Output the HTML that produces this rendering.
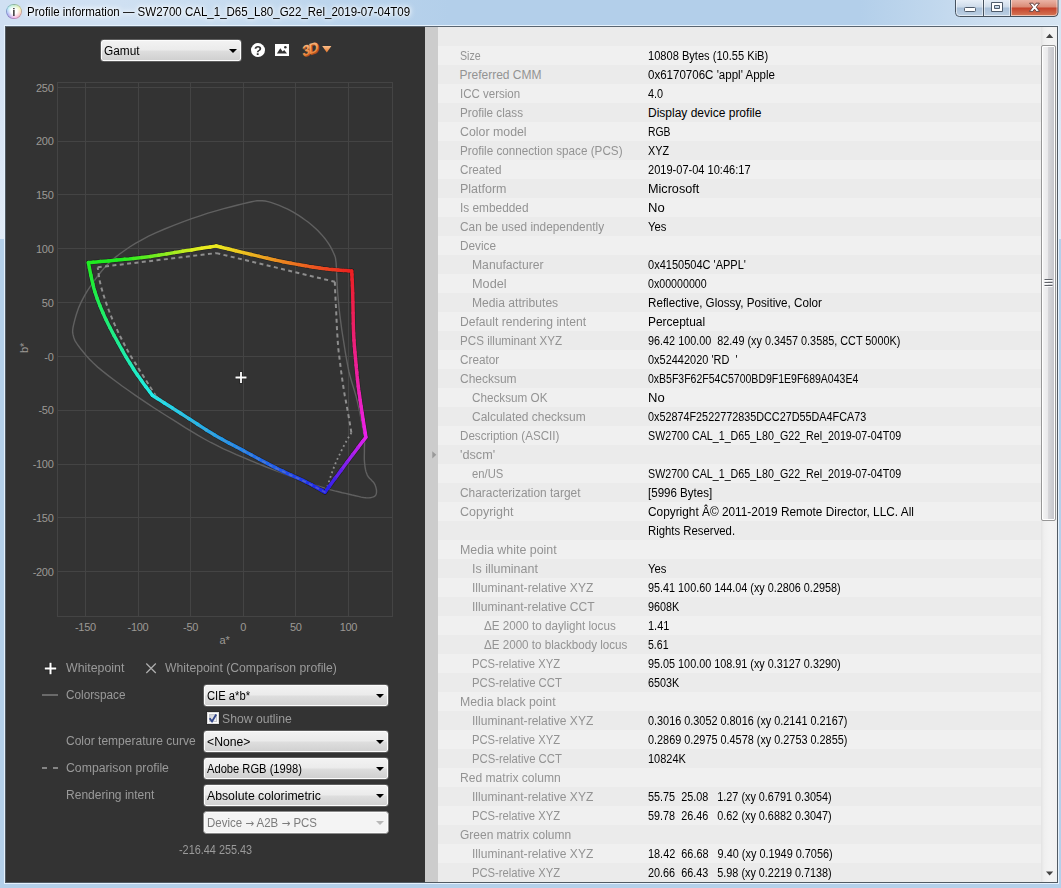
<!DOCTYPE html>
<html lang="en"><head><meta charset="utf-8"><title>Profile information</title>
<style>
*{box-sizing:border-box;margin:0;padding:0}
html,body{width:1061px;height:888px;overflow:hidden}
body{position:relative;font-family:"Liberation Sans",sans-serif;font-size:12px;color:#000;background:#b4d0ea}
.abs{position:absolute}
#frameTop{left:0;top:0;width:1061px;height:239px;background:linear-gradient(to right,#d0e0f3 0,#cfe0f2 120px,#c6dbef 240px,#b9d3ec 360px,#b3cfea 450px,#b3cfea 860px,#c0d7ed 930px,#cfe0f1 1000px,#d6e5f3 1061px)}
#frameSideL{left:0;top:24px;width:5px;height:215px;background:linear-gradient(to bottom,#d0e0f3,#e1ebf7)}
#frameSideR{left:1058px;top:24px;width:3px;height:215px;background:linear-gradient(to bottom,#d6e5f3,#e1ebf7)}
#hl{left:4px;top:25px;width:1055px;height:859px;border:1px solid #e6f2fd}
#client{left:5px;top:26px;width:1053px;height:857px;background:#333;border:1px solid #515a63;border-top-color:#5a6570;overflow:hidden}
#title{left:26.6px;top:3px;height:18px;line-height:18px;font-size:12px;white-space:pre;color:#000;text-shadow:0 0 6px #fff,0 0 6px #fff,0 0 3px #fff}
#left{left:6px;top:27px;width:419px;height:855px;background:#333}
#sash{left:425px;top:27px;width:13px;height:855px;background:#ccc}
#table{left:438px;top:27px;width:603px;height:855px;background:#f0f0f0;overflow:hidden}
.r{position:absolute;left:0;width:603px;height:19px;line-height:19px;white-space:pre}
.r.a{background:#ebebeb}
.r.b{background:#f0f0f0}
.l{position:absolute;top:1px;color:#939393;transform-origin:0 50%}
.v{position:absolute;top:1px;left:210px;color:#000;transform-origin:0 50%}
#sb{left:1041px;top:27px;width:16px;height:855px;background:linear-gradient(to right,#e3e3e3 0,#efefef 3px,#f3f3f3 8px,#f1f1f1 16px)}
#thumb{left:1041px;top:45px;width:15px;height:476px;border:1px solid #979797;border-radius:2px;background:linear-gradient(to right,#f5f5f5 0,#e9e9eb 45%,#d6d6d9 50%,#c2c3c9 100%);box-shadow:inset 0 0 0 1px #fff}
.lbl{position:absolute;color:#9a9a9a;white-space:pre;height:16px;line-height:16px}
.sel{position:absolute;height:23px;border:1px solid #5e5e5e;border-radius:3.5px;background:linear-gradient(to bottom,#f3f3f3 0,#ebebeb 48%,#dedede 52%,#cfcfcf 100%);box-shadow:inset 0 0 0 1px #fcfcfc;line-height:21px;padding:1px 0 0 3px;white-space:pre;color:#000}
.sel.dis{color:#7c7c7c;background:#f4f4f4;border-color:#8a8a8a}
.sel i{position:absolute;right:3.6px;top:8.6px;width:0;height:0;border-left:4px solid transparent;border-right:4px solid transparent;border-top:4.6px solid #000}
.sel.dis i{border-top-color:#b8b8b8}
.plot{position:absolute;left:0;top:0}
.ar{font-family:'DejaVu Sans',sans-serif;font-size:11px}
.sx{display:inline-block;transform-origin:0 50%;white-space:pre}
</style></head><body>
<div id="frameTop" class="abs"></div>
<div id="frameSideL" class="abs"></div><div id="frameSideR" class="abs"></div>
<div id="hl" class="abs"></div>
<div id="client" class="abs"></div>
<div class="abs" style="left:6.2px;top:3.9px;width:15.6px;height:15.6px;border-radius:50%;background:radial-gradient(circle at 50% 48%,#fff 0,#fff 26%,rgba(255,255,255,.5) 55%,rgba(255,255,255,0) 80%),conic-gradient(from 0deg,#7ad486,#eef08a 17%,#f8a294 32%,#ea86d4 48%,#9a7cdc 60%,#7c8cec 70%,#8ee6f2 84%,#7ad486);box-shadow:inset 0 0 0 0.8px rgba(70,70,110,.38)"></div><div class="abs" style="left:10px;top:4.8px;width:8px;height:14px;line-height:14px;text-align:center;font-weight:bold;font-size:11px;color:#1c1c1c;filter:grayscale(1);transform:scaleX(.9)">i</div>
<div id="title" class="abs"><span class="sx" style="transform:scaleX(0.9588)">Profile information — SW2700 CAL_1_D65_L80_G22_Rel_2019-07-04T09</span></div>
<svg class="abs" style="left:954px;top:0" width="106" height="19" viewBox="0 0 106 19">
<defs>
<linearGradient id="bt" x1="0" y1="0" x2="0" y2="1"><stop offset="0" stop-color="#e6eef7"/><stop offset="0.45" stop-color="#ccdae9"/><stop offset="0.46" stop-color="#a8bfd8"/><stop offset="1" stop-color="#bed1e4"/></linearGradient>
<linearGradient id="cl" x1="0" y1="0" x2="0" y2="1"><stop offset="0" stop-color="#eab3a6"/><stop offset="0.45" stop-color="#d98873"/><stop offset="0.46" stop-color="#c4402a"/><stop offset="1" stop-color="#d67a58"/></linearGradient>
</defs>
<path d="M1.5 0V12.5Q1.5 16.5 5.5 16.5H100Q104 16.5 104 12.5V0Z" fill="url(#bt)"/>
<path d="M56.5 0V16.5H100Q104 16.5 104 12.5V0Z" fill="url(#cl)"/>
<path d="M1.5 0V12.5Q1.5 16.5 5.5 16.5H100Q104 16.5 104 12.5V0" fill="none" stroke="#46525f" stroke-width="1"/>
<path d="M2.5 0V12.5Q2.5 15.5 5.5 15.5H100Q103 15.5 103 12.5V0" fill="none" stroke="#fff" stroke-opacity="0.55" stroke-width="1"/>
<path d="M29.5 0V16M56.5 0V16" stroke="#46525f" stroke-width="1"/>
<path d="M30.5 0V15.5M57.5 0V15.5M28.5 0V15.5M55.5 0V15.5" stroke="#fff" stroke-opacity="0.5" stroke-width="1"/>
<rect x="10.5" y="7.5" width="11" height="4" rx="1" fill="#fff" stroke="#4e5b6b"/>
<path d="M37.5 2.5H48.5V11.5H37.5Z M40.5 5.5V8.5H45.5V5.5Z" fill="#fff" fill-rule="evenodd" stroke="#4e5b6b"/>
<path d="M75.6 3.2H79L80.5 5.4L82 3.2H85.4L82.3 7.2L85.6 11.4H82.1L80.5 9.1L78.9 11.4H75.4L78.7 7.2Z" fill="#fff" stroke="#5a3a3a" stroke-width="0.9"/>
</svg>
<div id="left" class="abs">
<svg class="plot" width="419" height="640" viewBox="6 27 419 640">
<path d="M85.5 82V617M138.5 82V617M190.5 82V617M243.5 82V617M295.5 82V617M348.5 82V617M57 87.5H393M57 141.5H393M57 194.5H393M57 248.5H393M57 302.5H393M57 356.5H393M57 410.5H393M57 464.5H393M57 517.5H393M57 571.5H393" stroke="#444" stroke-width="1" fill="none"/>
<rect x="57.5" y="82.5" width="335" height="534" fill="none" stroke="#444"/>
<path d="M262.2 200.7 L259.5 200.6 L257.0 200.8 L254.6 201.1 L251.7 201.7 L248.2 202.5 L243.6 203.6 L237.9 205.0 L231.2 206.7 L223.8 208.6 L216.0 210.8 L208.0 213.2 L200.0 215.8 L191.7 218.7 L182.8 221.9 L173.7 225.4 L164.7 229.0 L156.2 232.6 L148.6 236.2 L141.8 239.8 L135.4 243.4 L129.6 247.0 L124.2 250.7 L119.3 254.3 L114.7 257.9 L110.6 261.4 L107.1 264.7 L104.1 268.1 L101.3 271.5 L98.6 274.9 L95.8 278.6 L93.0 282.5 L90.2 286.6 L87.5 290.7 L85.0 294.9 L82.7 299.1 L80.7 303.1 L78.9 307.1 L77.4 311.2 L76.1 315.3 L75.0 319.1 L74.1 322.7 L73.4 325.7 L72.9 328.1 L72.7 330.0 L72.6 331.6 L72.7 333.0 L73.0 334.4 L73.4 336.0 L73.8 337.6 L74.3 339.1 L75.0 340.6 L75.9 342.2 L77.2 344.2 L78.9 346.5 L81.0 349.3 L83.5 352.3 L86.3 355.7 L89.5 359.3 L93.3 363.1 L97.7 367.1 L102.9 371.4 L108.9 376.1 L115.4 381.0 L122.1 386.0 L128.9 390.8 L135.4 395.4 L141.7 399.7 L148.0 403.9 L154.2 408.0 L160.5 412.0 L166.8 416.0 L173.1 419.9 L179.4 423.8 L185.6 427.8 L191.9 431.6 L198.1 435.4 L204.4 439.0 L210.8 442.5 L217.2 445.7 L223.5 448.8 L229.9 451.7 L236.4 454.6 L243.1 457.4 L250.0 460.3 L257.3 463.3 L265.1 466.5 L273.1 469.6 L281.0 472.6 L288.4 475.5 L295.2 478.0 L301.3 480.2 L306.9 482.2 L312.2 484.1 L317.1 485.7 L321.8 487.2 L326.3 488.6 L330.6 489.8 L334.7 490.9 L338.5 491.8 L342.2 492.7 L345.6 493.4 L349.0 494.2 L352.2 495.0 L355.4 495.7 L358.3 496.4 L361.1 497.1 L363.6 497.5 L365.9 497.8 L367.9 497.9 L369.6 497.8 L371.1 497.6 L372.4 497.2 L373.5 496.8 L374.4 496.3 L375.2 495.7 L375.7 495.1 L376.1 494.3 L376.3 493.5 L376.5 492.5 L376.5 491.5 L376.5 490.4 L376.3 489.1 L376.0 487.8 L375.6 486.4 L375.1 485.0 L374.4 483.6 L373.5 482.3 L372.2 481.0 L370.9 479.6 L369.5 478.3 L368.3 476.8 L367.3 475.1 L366.6 473.3 L365.9 471.4 L365.5 469.5 L365.1 467.3 L364.8 465.0 L364.5 462.4 L364.3 459.4 L364.3 455.9 L364.4 452.1 L364.4 448.5 L364.5 445.2 L364.5 442.6 L364.5 441.0 L364.6 440.3 L364.7 440.0 L364.6 439.5 L364.4 438.2 L364.0 435.6 L363.3 431.5 L362.3 426.1 L361.2 420.0 L360.0 413.6 L358.7 407.4 L357.4 401.6 L356.1 396.4 L354.6 391.4 L353.1 386.4 L351.6 381.5 L350.2 376.6 L348.9 371.5 L347.8 366.2 L346.8 360.7 L345.8 355.2 L344.9 349.7 L344.1 344.4 L343.3 339.3 L342.5 334.5 L341.8 329.8 L341.2 325.3 L340.6 320.9 L340.0 316.4 L339.5 312.0 L339.0 307.5 L338.6 303.0 L338.2 298.5 L337.8 294.1 L337.5 289.8 L337.2 285.6 L337.0 281.4 L336.8 277.3 L336.6 273.2 L336.5 269.3 L336.3 265.9 L336.1 262.9 L335.8 260.6 L335.6 258.9 L335.4 257.6 L335.0 256.4 L334.5 255.1 L333.8 253.5 L332.9 251.5 L331.9 249.4 L330.7 247.2 L329.4 244.9 L327.9 242.6 L326.3 240.3 L324.5 238.0 L322.5 235.6 L320.3 233.2 L318.0 230.8 L315.6 228.5 L313.1 226.2 L310.5 224.0 L307.7 221.8 L304.8 219.7 L301.9 217.7 L299.0 215.7 L296.1 213.9 L293.3 212.2 L290.5 210.6 L287.7 209.2 L284.8 207.8 L282.0 206.6 L279.2 205.4 L276.4 204.3 L273.6 203.3 L270.8 202.3 L268.0 201.6 L265.1 201.0Z" fill="none" stroke="#606060" stroke-width="1.4"/>
<path d="M325.5 492.5 L323.5 491.4 L320.7 489.9 L317.4 488.1 L313.7 486.2 L309.7 484.1 L305.6 482.0 L301.2 479.9 L296.4 477.7 L291.3 475.4 L286.0 472.9 L280.7 470.5 L275.4 467.9 L270.1 465.2 L264.7 462.4 L259.3 459.5 L253.9 456.6 L248.6 453.7 L243.4 450.9 L238.5 448.3 L233.8 445.8 L229.1 443.4 L224.5 440.9 L219.7 438.2 L214.6 435.3 L209.1 432.0 L203.3 428.3 L197.3 424.5 L191.4 420.7 L185.8 417.0 L180.6 413.6 L175.7 410.3 L170.8 406.9 L166.2 403.7 L162.1 400.8 L158.7 398.3 L156.1 396.5 M156.1 396.5 L153.7 392.7 L150.3 387.2 L146.3 380.8 L142.2 374.3 L138.4 368.2 L135.4 363.4 L133.3 360.1 L131.8 357.7 L130.6 355.8 L129.6 354.1 L128.4 352.0 L126.9 349.3 L125.0 345.8 L123.0 341.8 L120.8 337.5 L118.6 333.1 L116.6 328.7 L114.7 324.7 L113.0 320.9 L111.5 317.2 L110.0 313.5 L108.7 310.0 L107.4 306.5 L106.2 303.1 L105.1 299.8 L104.0 296.5 L103.0 293.4 L102.1 290.3 L101.2 287.2 L100.5 284.2 L99.8 281.1 L99.2 277.8 L98.7 274.6 L98.3 271.6 L98.0 269.1 L97.7 267.3 M97.7 267.3 L112.0 265.6 L132.8 263.1 L157.0 260.2 L181.2 257.3 L202.0 254.8 L216.3 253.1 M216.3 253.1 L230.6 256.6 L251.4 261.6 L275.6 267.4 L299.7 273.3 L320.5 278.3 L334.8 281.8 M334.8 281.8 L334.9 283.9 L335.0 286.6 L335.1 289.9 L335.3 293.6 L335.5 297.9 L335.7 302.5 L336.0 307.9 L336.3 314.2 L336.6 321.0 L336.9 327.8 L337.3 334.0 L337.6 339.3 L337.9 343.4 L338.2 346.6 L338.4 349.3 L338.7 351.9 L339.1 354.8 L339.5 358.3 L340.0 362.5 L340.6 367.1 L341.2 371.9 L341.9 376.9 L342.6 381.8 L343.3 386.5 L344.0 391.1 L344.8 395.7 L345.7 400.2 L346.5 404.7 L347.3 408.9 L348.0 412.9 L348.7 416.8 L349.4 420.7 L350.0 424.4 L350.6 427.8 L351.0 430.6 L351.4 432.7" fill="none" stroke="#8e8e8e" stroke-width="2" stroke-dasharray="4 3.4"/>
<path d="M351.4 432.7 L350.5 434.2 L349.4 436.1 L347.9 438.5 L346.4 441.2 L344.8 444.0 L343.3 446.9 L341.8 449.9 L340.2 453.2 L338.6 456.6 L336.9 460.1 L335.3 463.8 L333.8 467.6 L332.3 471.8 L330.6 476.5 L329.1 481.3 L327.6 485.9 L326.4 489.7 L325.5 492.5" fill="none" stroke="#8e8e8e" stroke-width="1.8" stroke-dasharray="1.8 3"/>
<g fill="none" stroke="#000" stroke-opacity="0.3" stroke-width="4.8" stroke-linecap="round" stroke-linejoin="round"><path d="M88.3 262.6 L90.4 262.4 L93.3 262.2 L96.6 261.9 L100.3 261.6 L104.3 261.2 L108.5 260.9 L112.6 260.5 L116.6 260.1 L120.6 259.7 L124.7 259.3 L129.0 258.9 L133.3 258.4 L137.7 257.9 L142.0 257.5 L146.3 256.9 L150.5 256.4 L154.6 255.8 L158.6 255.2 L162.6 254.6 L166.5 253.9 L170.5 253.3 L174.4 252.6 L178.4 252.0 L182.5 251.3 L186.9 250.6 L191.6 249.9 L196.5 249.1 L201.4 248.3 L206.0 247.6 L210.2 247.0 L213.7 246.4 L216.3 246.0"/><path d="M216.3 246.0 L218.4 246.5 L221.1 247.2 L224.3 248.0 L227.9 248.8 L231.7 249.8 L235.6 250.7 L239.6 251.7 L243.4 252.6 L247.2 253.5 L251.1 254.5 L255.1 255.4 L259.2 256.4 L263.3 257.4 L267.4 258.3 L271.5 259.2 L275.4 260.1 L279.3 260.9 L283.2 261.7 L287.0 262.5 L290.9 263.2 L294.6 263.9 L298.4 264.6 L302.0 265.2 L305.6 265.8 L309.1 266.4 L312.6 266.9 L316.1 267.4 L319.5 267.9 L322.8 268.4 L326.0 268.8 L329.0 269.2 L332.0 269.5 L334.9 269.8 L337.9 270.1 L340.7 270.3 L343.5 270.5 L346.0 270.6 L348.3 270.8 L350.2 270.9 L351.7 271.0"/><path d="M351.7 271.0 L351.8 272.6 L351.9 274.6 L352.0 276.9 L352.1 279.6 L352.3 282.5 L352.4 285.8 L352.6 289.3 L352.7 293.1 L352.8 297.3 L352.9 302.2 L353.0 307.4 L353.1 312.9 L353.2 318.3 L353.3 323.6 L353.4 328.6 L353.6 333.0 L353.8 336.8 L354.0 340.3 L354.2 343.4 L354.4 346.4 L354.7 349.2 L354.9 352.1 L355.2 355.1 L355.5 358.3 L355.8 361.7 L356.1 365.2 L356.4 368.7 L356.8 372.3 L357.1 375.9 L357.5 379.5 L357.9 383.0 L358.3 386.5 L358.7 389.9 L359.2 393.3 L359.7 396.6 L360.1 399.9 L360.6 403.2 L361.1 406.5 L361.6 409.7 L362.1 412.9 L362.6 416.2 L363.1 419.7 L363.7 423.2 L364.2 426.7 L364.8 430.0 L365.2 432.9 L365.6 435.3 L365.9 437.2"/><path d="M365.9 437.2 L364.5 439.1 L362.6 441.5 L360.4 444.4 L357.9 447.7 L355.3 451.2 L352.6 454.8 L349.8 458.5 L347.2 462.0 L344.4 465.7 L341.4 469.9 L338.2 474.3 L334.9 478.6 L331.9 482.8 L329.1 486.6 L326.7 489.8 L325.0 492.2"/><path d="M325.0 492.2 L323.6 491.4 L321.8 490.4 L319.6 489.2 L317.2 487.8 L314.5 486.4 L311.7 484.8 L308.7 483.3 L305.6 481.7 L302.4 480.1 L298.9 478.5 L295.1 476.8 L291.3 475.1 L287.3 473.3 L283.3 471.4 L279.3 469.5 L275.4 467.6 L271.5 465.6 L267.5 463.5 L263.4 461.4 L259.3 459.2 L255.2 457.0 L251.2 454.8 L247.3 452.7 L243.4 450.6 L239.7 448.6 L236.1 446.7 L232.6 444.9 L229.1 443.1 L225.6 441.2 L222.1 439.3 L218.4 437.2 L214.6 435.0 L210.6 432.6 L206.3 429.9 L202.0 427.1 L197.6 424.3 L193.2 421.4 L188.8 418.6 L184.6 415.9 L180.6 413.3 L176.6 410.8 L172.5 408.1 L168.4 405.5 L164.4 403.0 L160.7 400.6 L157.3 398.5 L154.5 396.8 L152.4 395.4"/><path d="M152.4 395.4 L151.2 393.8 L149.7 391.8 L147.8 389.3 L145.8 386.6 L143.6 383.7 L141.4 380.6 L139.3 377.6 L137.3 374.7 L135.4 371.9 L133.5 369.0 L131.7 366.0 L129.8 363.0 L127.9 360.0 L126.0 356.8 L124.1 353.6 L122.2 350.2 L120.2 346.7 L118.2 343.0 L116.1 339.2 L114.0 335.3 L111.9 331.4 L109.9 327.5 L108.0 323.7 L106.2 320.0 L104.5 316.4 L102.9 312.8 L101.4 309.3 L100.0 305.8 L98.6 302.4 L97.3 298.9 L96.1 295.4 L94.9 291.8 L93.8 288.0 L92.8 283.9 L91.8 279.6 L90.9 275.4 L90.1 271.5 L89.4 267.9 L88.8 264.9 L88.3 262.6"/></g><g fill="none" stroke-width="3.5" stroke-linecap="round" stroke-linejoin="round"><path d="M88.3 262.6 L90.4 262.4 L93.3 262.2" stroke="rgb(32,236,32)"/><path d="M93.3 262.2 L96.6 261.9 L100.3 261.6" stroke="rgb(32,236,32)"/><path d="M100.3 261.6 L104.3 261.2 L108.5 260.9" stroke="rgb(32,236,32)"/><path d="M108.5 260.9 L112.6 260.5 L116.6 260.1" stroke="rgb(32,236,32)"/><path d="M116.6 260.1 L120.6 259.7 L124.7 259.3" stroke="rgb(32,236,32)"/><path d="M124.7 259.3 L129.0 258.9 L133.3 258.4" stroke="rgb(44,236,32)"/><path d="M133.3 258.4 L137.7 257.9 L142.0 257.5" stroke="rgb(66,236,32)"/><path d="M142.0 257.5 L146.3 256.9 L150.5 256.4" stroke="rgb(88,236,32)"/><path d="M150.5 256.4 L154.6 255.8 L158.6 255.2" stroke="rgb(110,236,32)"/><path d="M158.6 255.2 L162.6 254.6 L166.5 253.9" stroke="rgb(130,236,32)"/><path d="M166.5 253.9 L170.5 253.3 L174.4 252.6" stroke="rgb(151,236,32)"/><path d="M174.4 252.6 L178.4 252.0 L182.5 251.3" stroke="rgb(171,236,32)"/><path d="M182.5 251.3 L186.9 250.6 L191.6 249.9" stroke="rgb(193,236,32)"/><path d="M191.6 249.9 L196.5 249.1 L201.4 248.3" stroke="rgb(218,236,32)"/><path d="M201.4 248.3 L206.0 247.6 L210.2 247.0" stroke="rgb(236,236,32)"/><path d="M210.2 247.0 L213.7 246.4 L216.3 246.0" stroke="rgb(236,236,32)"/><path d="M216.3 246.0 L218.4 246.5 L221.1 247.2" stroke="rgb(236,232,32)"/><path d="M221.1 247.2 L224.3 248.0 L227.9 248.8" stroke="rgb(236,224,32)"/><path d="M227.9 248.8 L231.7 249.8 L235.6 250.7" stroke="rgb(236,212,32)"/><path d="M235.6 250.7 L239.6 251.7 L243.4 252.6" stroke="rgb(236,201,32)"/><path d="M243.4 252.6 L247.2 253.5 L251.1 254.5" stroke="rgb(236,189,32)"/><path d="M251.1 254.5 L255.1 255.4 L259.2 256.4" stroke="rgb(236,177,32)"/><path d="M259.2 256.4 L263.3 257.4 L267.4 258.3" stroke="rgb(236,164,32)"/><path d="M267.4 258.3 L271.5 259.2 L275.4 260.1" stroke="rgb(236,152,32)"/><path d="M275.4 260.1 L279.3 260.9 L283.2 261.7" stroke="rgb(236,140,32)"/><path d="M283.2 261.7 L287.0 262.5 L290.9 263.2" stroke="rgb(236,129,32)"/><path d="M290.9 263.2 L294.6 263.9 L298.4 264.6" stroke="rgb(236,117,32)"/><path d="M298.4 264.6 L302.0 265.2 L305.6 265.8" stroke="rgb(236,106,32)"/><path d="M305.6 265.8 L309.1 266.4 L312.6 266.9" stroke="rgb(236,95,32)"/><path d="M312.6 266.9 L316.1 267.4 L319.5 267.9" stroke="rgb(236,85,32)"/><path d="M319.5 267.9 L322.8 268.4 L326.0 268.8" stroke="rgb(236,75,32)"/><path d="M326.0 268.8 L329.0 269.2 L332.0 269.5" stroke="rgb(236,66,32)"/><path d="M332.0 269.5 L334.9 269.8 L337.9 270.1" stroke="rgb(236,57,32)"/><path d="M337.9 270.1 L340.7 270.3 L343.5 270.5" stroke="rgb(236,48,32)"/><path d="M343.5 270.5 L346.0 270.6 L348.3 270.8" stroke="rgb(236,41,32)"/><path d="M348.3 270.8 L350.2 270.9 L351.7 271.0" stroke="rgb(236,35,32)"/><path d="M351.7 271.0 L351.8 272.6 L351.9 274.6" stroke="rgb(236,32,34)"/><path d="M351.9 274.6 L352.0 276.9 L352.1 279.6" stroke="rgb(236,32,39)"/><path d="M352.1 279.6 L352.3 282.5 L352.4 285.8" stroke="rgb(236,32,46)"/><path d="M352.4 285.8 L352.6 289.3 L352.7 293.1" stroke="rgb(236,32,55)"/><path d="M352.7 293.1 L352.8 297.3 L352.9 302.2" stroke="rgb(236,32,65)"/><path d="M352.9 302.2 L353.0 307.4 L353.1 312.9" stroke="rgb(236,32,77)"/><path d="M353.1 312.9 L353.2 318.3 L353.3 323.6" stroke="rgb(236,32,90)"/><path d="M353.3 323.6 L353.4 328.6 L353.6 333.0" stroke="rgb(236,32,102)"/><path d="M353.6 333.0 L353.8 336.8 L354.0 340.3" stroke="rgb(236,32,112)"/><path d="M354.0 340.3 L354.2 343.4 L354.4 346.4" stroke="rgb(236,32,120)"/><path d="M354.4 346.4 L354.7 349.2 L354.9 352.1" stroke="rgb(236,32,128)"/><path d="M354.9 352.1 L355.2 355.1 L355.5 358.3" stroke="rgb(236,32,135)"/><path d="M355.5 358.3 L355.8 361.7 L356.1 365.2" stroke="rgb(236,32,143)"/><path d="M356.1 365.2 L356.4 368.7 L356.8 372.3" stroke="rgb(236,32,152)"/><path d="M356.8 372.3 L357.1 375.9 L357.5 379.5" stroke="rgb(236,32,160)"/><path d="M357.5 379.5 L357.9 383.0 L358.3 386.5" stroke="rgb(236,32,169)"/><path d="M358.3 386.5 L358.7 389.9 L359.2 393.3" stroke="rgb(236,32,178)"/><path d="M359.2 393.3 L359.7 396.6 L360.1 399.9" stroke="rgb(236,32,186)"/><path d="M360.1 399.9 L360.6 403.2 L361.1 406.5" stroke="rgb(236,32,194)"/><path d="M361.1 406.5 L361.6 409.7 L362.1 412.9" stroke="rgb(236,32,202)"/><path d="M362.1 412.9 L362.6 416.2 L363.1 419.7" stroke="rgb(236,32,210)"/><path d="M363.1 419.7 L363.7 423.2 L364.2 426.7" stroke="rgb(236,32,219)"/><path d="M364.2 426.7 L364.8 430.0 L365.2 432.9" stroke="rgb(236,32,227)"/><path d="M365.2 432.9 L365.6 435.3 L365.9 437.2" stroke="rgb(236,32,233)"/><path d="M365.9 437.2 L364.5 439.1 L362.6 441.5" stroke="rgb(228,32,236)"/><path d="M362.6 441.5 L360.4 444.4 L357.9 447.7" stroke="rgb(208,32,236)"/><path d="M357.9 447.7 L355.3 451.2 L352.6 454.8" stroke="rgb(183,32,236)"/><path d="M352.6 454.8 L349.8 458.5 L347.2 462.0" stroke="rgb(157,32,236)"/><path d="M347.2 462.0 L344.4 465.7 L341.4 469.9" stroke="rgb(129,32,236)"/><path d="M341.4 469.9 L338.2 474.3 L334.9 478.6" stroke="rgb(98,32,236)"/><path d="M334.9 478.6 L331.9 482.8 L329.1 486.6" stroke="rgb(67,32,236)"/><path d="M329.1 486.6 L326.7 489.8 L325.0 492.2" stroke="rgb(42,32,236)"/><path d="M325.0 492.2 L323.6 491.4 L321.8 490.4" stroke="rgb(32,34,236)"/><path d="M321.8 490.4 L319.6 489.2 L317.2 487.8" stroke="rgb(32,39,236)"/><path d="M317.2 487.8 L314.5 486.4 L311.7 484.8" stroke="rgb(32,44,236)"/><path d="M311.7 484.8 L308.7 483.3 L305.6 481.7" stroke="rgb(32,51,236)"/><path d="M305.6 481.7 L302.4 480.1 L298.9 478.5" stroke="rgb(32,59,236)"/><path d="M298.9 478.5 L295.1 476.8 L291.3 475.1" stroke="rgb(32,67,236)"/><path d="M291.3 475.1 L287.3 473.3 L283.3 471.4" stroke="rgb(32,75,236)"/><path d="M283.3 471.4 L279.3 469.5 L275.4 467.6" stroke="rgb(32,85,236)"/><path d="M275.4 467.6 L271.5 465.6 L267.5 463.5" stroke="rgb(32,94,236)"/><path d="M267.5 463.5 L263.4 461.4 L259.3 459.2" stroke="rgb(32,103,236)"/><path d="M259.3 459.2 L255.2 457.0 L251.2 454.8" stroke="rgb(32,112,236)"/><path d="M251.2 454.8 L247.3 452.7 L243.4 450.6" stroke="rgb(32,122,236)"/><path d="M243.4 450.6 L239.7 448.6 L236.1 446.7" stroke="rgb(32,131,236)"/><path d="M236.1 446.7 L232.6 444.9 L229.1 443.1" stroke="rgb(32,139,236)"/><path d="M229.1 443.1 L225.6 441.2 L222.1 439.3" stroke="rgb(32,147,236)"/><path d="M222.1 439.3 L218.4 437.2 L214.6 435.0" stroke="rgb(32,156,236)"/><path d="M214.6 435.0 L210.6 432.6 L206.3 429.9" stroke="rgb(32,165,236)"/><path d="M206.3 429.9 L202.0 427.1 L197.6 424.3" stroke="rgb(32,175,236)"/><path d="M197.6 424.3 L193.2 421.4 L188.8 418.6" stroke="rgb(32,186,236)"/><path d="M188.8 418.6 L184.6 415.9 L180.6 413.3" stroke="rgb(32,197,236)"/><path d="M180.6 413.3 L176.6 410.8 L172.5 408.1" stroke="rgb(32,207,236)"/><path d="M172.5 408.1 L168.4 405.5 L164.4 403.0" stroke="rgb(32,216,236)"/><path d="M164.4 403.0 L160.7 400.6 L157.3 398.5" stroke="rgb(32,226,236)"/><path d="M157.3 398.5 L154.5 396.8 L152.4 395.4" stroke="rgb(32,233,236)"/><path d="M152.4 395.4 L151.2 393.8 L149.7 391.8" stroke="rgb(32,236,233)"/><path d="M149.7 391.8 L147.8 389.3 L145.8 386.6" stroke="rgb(32,236,225)"/><path d="M145.8 386.6 L143.6 383.7 L141.4 380.6" stroke="rgb(32,236,216)"/><path d="M141.4 380.6 L139.3 377.6 L137.3 374.7" stroke="rgb(32,236,206)"/><path d="M137.3 374.7 L135.4 371.9 L133.5 369.0" stroke="rgb(32,236,196)"/><path d="M133.5 369.0 L131.7 366.0 L129.8 363.0" stroke="rgb(32,236,187)"/><path d="M129.8 363.0 L127.9 360.0 L126.0 356.8" stroke="rgb(32,236,177)"/><path d="M126.0 356.8 L124.1 353.6 L122.2 350.2" stroke="rgb(32,236,167)"/><path d="M122.2 350.2 L120.2 346.7 L118.2 343.0" stroke="rgb(32,236,156)"/><path d="M118.2 343.0 L116.1 339.2 L114.0 335.3" stroke="rgb(32,236,144)"/><path d="M114.0 335.3 L111.9 331.4 L109.9 327.5" stroke="rgb(32,236,132)"/><path d="M109.9 327.5 L108.0 323.7 L106.2 320.0" stroke="rgb(32,236,120)"/><path d="M106.2 320.0 L104.5 316.4 L102.9 312.8" stroke="rgb(32,236,109)"/><path d="M102.9 312.8 L101.4 309.3 L100.0 305.8" stroke="rgb(32,236,99)"/><path d="M100.0 305.8 L98.6 302.4 L97.3 298.9" stroke="rgb(32,236,88)"/><path d="M97.3 298.9 L96.1 295.4 L94.9 291.8" stroke="rgb(32,236,78)"/><path d="M94.9 291.8 L93.8 288.0 L92.8 283.9" stroke="rgb(32,236,67)"/><path d="M92.8 283.9 L91.8 279.6 L90.9 275.4" stroke="rgb(32,236,56)"/><path d="M90.9 275.4 L90.1 271.5 L89.4 267.9" stroke="rgb(32,236,45)"/><path d="M89.4 267.9 L88.8 264.9 L88.3 262.6" stroke="rgb(32,236,36)"/></g>
<path d="M325.5 492.5 L323.5 491.4 L320.7 489.9 L317.4 488.1 L313.7 486.2 L309.7 484.1 L305.6 482.0 L301.2 479.9 L296.4 477.7 L291.3 475.4 L286.0 472.9 L280.7 470.5 L275.4 467.9 L270.1 465.2 L264.7 462.4 L259.3 459.5 L253.9 456.6 L248.6 453.7 L243.4 450.9 L238.5 448.3 L233.8 445.8 L229.1 443.4 L224.5 440.9 L219.7 438.2 L214.6 435.3 L209.1 432.0 L203.3 428.3 L197.3 424.5 L191.4 420.7 L185.8 417.0 L180.6 413.6 L175.7 410.3 L170.8 406.9 L166.2 403.7 L162.1 400.8 L158.7 398.3 L156.1 396.5" fill="none" stroke="#999" stroke-width="1.6" stroke-dasharray="4 3.4" opacity="0.4"/>
<path d="M235 377.5H247M241 371.5V383.5" stroke="#222" stroke-width="3.6" fill="none"/><path d="M235.5 377.5H246.5M241 372V383" stroke="#fff" stroke-width="1.8" fill="none"/>
<g font-family="'Liberation Sans', sans-serif" font-size="11" fill="#9c9995" letter-spacing="-0.3"><text x="53.5" y="91.6" text-anchor="end">250</text><text x="53.5" y="145.4" text-anchor="end">200</text><text x="53.5" y="199.2" text-anchor="end">150</text><text x="53.5" y="253.0" text-anchor="end">100</text><text x="53.5" y="306.8" text-anchor="end">50</text><text x="53.5" y="360.6" text-anchor="end">-0</text><text x="53.5" y="414.4" text-anchor="end">-50</text><text x="53.5" y="468.2" text-anchor="end">-100</text><text x="53.5" y="522.0" text-anchor="end">-150</text><text x="53.5" y="575.8" text-anchor="end">-200</text><text x="85.4" y="630.6" text-anchor="middle">-150</text><text x="138.0" y="630.6" text-anchor="middle">-100</text><text x="190.6" y="630.6" text-anchor="middle">-50</text><text x="243.2" y="630.6" text-anchor="middle">0</text><text x="295.8" y="630.6" text-anchor="middle">50</text><text x="348.4" y="630.6" text-anchor="middle">100</text><text x="224.5" y="643.6" text-anchor="middle">a*</text><text transform="translate(27.6,348) rotate(-90)" text-anchor="middle">b*</text></g>
</svg>
<div class="sel" style="left:94px;top:12px;width:142px"><span class="sx" style="transform:scaleX(0.9887)">Gamut</span><i></i></div>
<svg class="abs" style="left:244px;top:15px;filter:grayscale(1)" width="16" height="16" viewBox="0 0 16 16"><circle cx="8" cy="8.1" r="7" fill="#fff"/><text x="8" y="12.7" text-anchor="middle" font-family="'Liberation Sans',sans-serif" font-weight="bold" font-size="13" fill="#333">?</text></svg>
<svg class="abs" style="left:269px;top:17px" width="14" height="12" viewBox="0 0 14 12"><rect width="14" height="12" fill="#fff"/><path d="M1.9 9.6L5.3 4.2L7.6 7.4L9.2 5.9L12 9.6Z" fill="#333"/><circle cx="10.3" cy="3.3" r="1.25" fill="#333"/></svg>
<svg class="abs" style="left:294px;top:13px" width="34" height="20" viewBox="0 0 34 20"><defs><linearGradient id="og" x1="0" y1="0" x2="0" y2="1"><stop offset="0" stop-color="#ffc08a"/><stop offset="1" stop-color="#e2742a"/></linearGradient></defs><text transform="translate(3.2,17.4) rotate(-17) skewX(-14)" font-family="'Liberation Sans',sans-serif" font-weight="bold" font-size="14.5" fill="#b3541a" letter-spacing="-1.3">3D</text><text transform="translate(2.4,16.4) rotate(-17) skewX(-14)" font-family="'Liberation Sans',sans-serif" font-weight="bold" font-size="14.5" fill="url(#og)" letter-spacing="-1.3">3D</text><path d="M22.2 6L31.4 6L26.8 12.4Z" fill="url(#og)"/></svg>
<svg class="abs" style="left:38px;top:634.5px" width="13" height="13" viewBox="0 0 13 13"><path d="M0.3 6.5H12.7M6.5 0.3V12.7" stroke="#242424" stroke-width="3.8" fill="none"/><path d="M0.8 6.5H12.2M6.5 0.8V12.2" stroke="#fff" stroke-width="2" fill="none"/></svg>
<div class="lbl" style="left:60.4px;top:633px"><span class="sx" style="transform:scaleX(1.0300)">Whitepoint</span></div>
<svg class="abs" style="left:139px;top:635px" width="12" height="12" viewBox="0 0 12 12"><path d="M1.3 1.5L10.8 11M10.8 1.5L1.3 11" stroke="#b0b0b0" stroke-width="1.2" fill="none"/></svg>
<div class="lbl" style="left:159.4px;top:633px"><span class="sx" style="transform:scaleX(1.0190)">Whitepoint (Comparison profile)</span></div>
<div class="abs" style="left:36px;top:667.4px;width:16px;height:1.2px;background:#6a6a6a"></div>
<div class="lbl" style="left:60.4px;top:660px"><span class="sx" style="transform:scaleX(0.9799)">Colorspace</span></div>
<div class="sel" style="left:197px;top:657px;width:186px"><span class="sx" style="transform:scaleX(0.9360)">CIE a*b*</span><i></i></div>
<div class="abs" style="left:201px;top:685px;width:12px;height:12px;border:1px solid #dedede;background:#fdfdfd;padding:1px;box-shadow:0 0 0 1px #2b2b2b"><div style="width:8px;height:8px;border:1px solid #c4c6cb;background:linear-gradient(135deg,#cfd1d6,#f4f4f5)"></div></div>
<svg class="abs" style="left:202px;top:686px" width="10" height="10" viewBox="0 0 10 10"><path d="M1.6 5.2L4.0 8.4L8.2 1.6" stroke="#33478a" stroke-width="1.9" fill="none"/></svg>
<div class="lbl" style="left:216.3px;top:684px"><span class="sx" style="transform:scaleX(1.0162)">Show outline</span></div>
<div class="lbl" style="left:60.4px;top:706px"><span class="sx" style="transform:scaleX(1.0016)">Color temperature curve</span></div>
<div class="sel" style="left:197px;top:703px;width:186px"><span class="sx" style="transform:scaleX(1.0168)">&lt;None&gt;</span><i></i></div>
<div class="abs" style="left:36.3px;top:740.2px;width:5px;height:1.5px;background:#858585"></div>
<div class="abs" style="left:47px;top:740.2px;width:5.3px;height:1.5px;background:#858585"></div>
<div class="lbl" style="left:60.4px;top:733px"><span class="sx" style="transform:scaleX(1.0221)">Comparison profile</span></div>
<div class="sel" style="left:197px;top:730px;width:186px"><span class="sx" style="transform:scaleX(0.9300)">Adobe RGB (1998)</span><i></i></div>
<div class="lbl" style="left:60.4px;top:760px"><span class="sx" style="transform:scaleX(1.0034)">Rendering intent</span></div>
<div class="sel" style="left:197px;top:757px;width:186px"><span class="sx" style="transform:scaleX(1.0216)">Absolute colorimetric</span><i></i></div>
<div class="sel dis" style="left:197px;top:784px;width:186px"><span class="sx" style="transform:scaleX(0.955)">Device <span class="ar">→</span> A2B <span class="ar">→</span> PCS</span><i></i></div>
<div class="lbl" style="left:172.9px;top:815px"><span class="sx" style="transform:scaleX(0.9060)">-216.44 255.43</span></div>
</div>
<div id="sash" class="abs"><svg class="abs" style="left:7px;top:424px" width="5" height="8" viewBox="0 0 5 8"><path d="M0.3 0.3L4.3 3.8L0.3 7.4Z" fill="#999"/></svg></div>
<div id="table" class="abs">
<div class="r a" style="top:0px"></div>
<div class="r b" style="top:19px"><span class="l" style="left:21.5px;transform:scaleX(0.8870)">Size</span><span class="v" style="transform:scaleX(0.9240)">10808 Bytes (10.55 KiB)</span></div>
<div class="r a" style="top:38px"><span class="l" style="left:21.5px;transform:scaleX(1.0000)">Preferred CMM</span><span class="v" style="transform:scaleX(0.9617)">0x6170706C 'appl' Apple</span></div>
<div class="r b" style="top:57px"><span class="l" style="left:21.5px;transform:scaleX(0.9597)">ICC version</span><span class="v" style="transform:scaleX(0.9059)">4.0</span></div>
<div class="r a" style="top:76px"><span class="l" style="left:21.5px;transform:scaleX(0.9734)">Profile class</span><span class="v" style="transform:scaleX(1.0000)">Display device profile</span></div>
<div class="r b" style="top:95px"><span class="l" style="left:21.5px;transform:scaleX(1.0297)">Color model</span><span class="v" style="transform:scaleX(0.8654)">RGB</span></div>
<div class="r a" style="top:114px"><span class="l" style="left:21.5px;transform:scaleX(0.9747)">Profile connection space (PCS)</span><span class="v" style="transform:scaleX(0.9000)">XYZ</span></div>
<div class="r b" style="top:133px"><span class="l" style="left:21.5px;transform:scaleX(0.9738)">Created</span><span class="v" style="transform:scaleX(0.9205)">2019-07-04 10:46:17</span></div>
<div class="r a" style="top:152px"><span class="l" style="left:21.5px;transform:scaleX(1.0409)">Platform</span><span class="v" style="transform:scaleX(1.0531)">Microsoft</span></div>
<div class="r b" style="top:171px"><span class="l" style="left:21.5px;transform:scaleX(0.9870)">Is embedded</span><span class="v" style="transform:scaleX(1.0867)">No</span></div>
<div class="r a" style="top:190px"><span class="l" style="left:21.5px;transform:scaleX(0.9863)">Can be used independently</span><span class="v" style="transform:scaleX(0.9400)">Yes</span></div>
<div class="r b" style="top:209px"><span class="l" style="left:21.5px;transform:scaleX(0.9833)">Device</span></div>
<div class="r a" style="top:228px"><span class="l" style="left:33.5px;transform:scaleX(1.0127)">Manufacturer</span><span class="v" style="transform:scaleX(0.9178)">0x4150504C 'APPL'</span></div>
<div class="r b" style="top:247px"><span class="l" style="left:33.5px;transform:scaleX(1.0594)">Model</span><span class="v" style="transform:scaleX(0.8881)">0x00000000</span></div>
<div class="r a" style="top:266px"><span class="l" style="left:33.5px;transform:scaleX(1.0094)">Media attributes</span><span class="v" style="transform:scaleX(0.9704)">Reflective, Glossy, Positive, Color</span></div>
<div class="r b" style="top:285px"><span class="l" style="left:21.5px;transform:scaleX(1.0104)">Default rendering intent</span><span class="v" style="transform:scaleX(0.9947)">Perceptual</span></div>
<div class="r a" style="top:304px"><span class="l" style="left:21.5px;transform:scaleX(0.9686)">PCS illuminant XYZ</span><span class="v" style="transform:scaleX(0.9032)">96.42 100.00  82.49 (xy 0.3457 0.3585, CCT 5000K)</span></div>
<div class="r b" style="top:323px"><span class="l" style="left:21.5px;transform:scaleX(0.9800)">Creator</span><span class="v" style="transform:scaleX(0.9133)">0x52442020 'RD  '</span></div>
<div class="r a" style="top:342px"><span class="l" style="left:21.5px;transform:scaleX(0.9982)">Checksum</span><span class="v" style="transform:scaleX(0.8755)">0xB5F3F62F54C5700BD9F1E9F689A043E4</span></div>
<div class="r b" style="top:361px"><span class="l" style="left:33.5px;transform:scaleX(0.9753)">Checksum OK</span><span class="v" style="transform:scaleX(1.0867)">No</span></div>
<div class="r a" style="top:380px"><span class="l" style="left:33.5px;transform:scaleX(0.9965)">Calculated checksum</span><span class="v" style="transform:scaleX(0.9012)">0x52874F2522772835DCC27D55DA4FCA73</span></div>
<div class="r b" style="top:399px"><span class="l" style="left:21.5px;transform:scaleX(0.9676)">Description (ASCII)</span><span class="v" style="transform:scaleX(0.8905)">SW2700 CAL_1_D65_L80_G22_Rel_2019-07-04T09</span></div>
<div class="r a" style="top:418px"><span class="l" style="left:21.5px;transform:scaleX(1.0576)">'dscm'</span></div>
<div class="r b" style="top:437px"><span class="l" style="left:33.5px;transform:scaleX(0.9382)">en/US</span><span class="v" style="transform:scaleX(0.8905)">SW2700 CAL_1_D65_L80_G22_Rel_2019-07-04T09</span></div>
<div class="r a" style="top:456px"><span class="l" style="left:21.5px;transform:scaleX(0.9926)">Characterization target</span><span class="v" style="transform:scaleX(0.9621)">[5996 Bytes]</span></div>
<div class="r b" style="top:475px"><span class="l" style="left:21.5px;transform:scaleX(1.0412)">Copyright</span><span class="v" style="transform:scaleX(0.9870)">Copyright Â© 2011-2019 Remote Director, LLC. All</span></div>
<div class="r a" style="top:494px"><span class="v" style="transform:scaleX(0.9462)">Rights Reserved.</span></div>
<div class="r b" style="top:513px"><span class="l" style="left:21.5px;transform:scaleX(1.0355)">Media white point</span></div>
<div class="r a" style="top:532px"><span class="l" style="left:33.5px;transform:scaleX(1.0397)">Is illuminant</span><span class="v" style="transform:scaleX(0.9400)">Yes</span></div>
<div class="r b" style="top:551px"><span class="l" style="left:33.5px;transform:scaleX(1.0050)">Illuminant-relative XYZ</span><span class="v" style="transform:scaleX(0.9019)">95.41 100.60 144.04 (xy 0.2806 0.2958)</span></div>
<div class="r a" style="top:570px"><span class="l" style="left:33.5px;transform:scaleX(1.0049)">Illuminant-relative CCT</span><span class="v" style="transform:scaleX(0.9000)">9608K</span></div>
<div class="r b" style="top:589px"><span class="l" style="left:45.5px;transform:scaleX(0.9728)">ΔE 2000 to daylight locus</span><span class="v" style="transform:scaleX(0.9174)">1.41</span></div>
<div class="r a" style="top:608px"><span class="l" style="left:45.5px;transform:scaleX(0.9678)">ΔE 2000 to blackbody locus</span><span class="v" style="transform:scaleX(0.8792)">5.61</span></div>
<div class="r b" style="top:627px"><span class="l" style="left:33.5px;transform:scaleX(0.9362)">PCS-relative XYZ</span><span class="v" style="transform:scaleX(0.9019)">95.05 100.00 108.91 (xy 0.3127 0.3290)</span></div>
<div class="r a" style="top:646px"><span class="l" style="left:33.5px;transform:scaleX(0.9421)">PCS-relative CCT</span><span class="v" style="transform:scaleX(0.9000)">6503K</span></div>
<div class="r b" style="top:665px"><span class="l" style="left:21.5px;transform:scaleX(1.0237)">Media black point</span></div>
<div class="r a" style="top:684px"><span class="l" style="left:33.5px;transform:scaleX(1.0050)">Illuminant-relative XYZ</span><span class="v" style="transform:scaleX(0.9055)">0.3016 0.3052 0.8016 (xy 0.2141 0.2167)</span></div>
<div class="r b" style="top:703px"><span class="l" style="left:33.5px;transform:scaleX(0.9362)">PCS-relative XYZ</span><span class="v" style="transform:scaleX(0.9055)">0.2869 0.2975 0.4578 (xy 0.2753 0.2855)</span></div>
<div class="r a" style="top:722px"><span class="l" style="left:33.5px;transform:scaleX(0.9421)">PCS-relative CCT</span><span class="v" style="transform:scaleX(0.9146)">10824K</span></div>
<div class="r b" style="top:741px"><span class="l" style="left:21.5px;transform:scaleX(1.0071)">Red matrix column</span></div>
<div class="r a" style="top:760px"><span class="l" style="left:33.5px;transform:scaleX(1.0050)">Illuminant-relative XYZ</span><span class="v" style="transform:scaleX(0.9029)">55.75  25.08   1.27 (xy 0.6791 0.3054)</span></div>
<div class="r b" style="top:779px"><span class="l" style="left:33.5px;transform:scaleX(0.9362)">PCS-relative XYZ</span><span class="v" style="transform:scaleX(0.9029)">59.78  26.46   0.62 (xy 0.6882 0.3047)</span></div>
<div class="r a" style="top:798px"><span class="l" style="left:21.5px;transform:scaleX(0.9982)">Green matrix column</span></div>
<div class="r b" style="top:817px"><span class="l" style="left:33.5px;transform:scaleX(1.0050)">Illuminant-relative XYZ</span><span class="v" style="transform:scaleX(0.9074)">18.42  66.68   9.40 (xy 0.1949 0.7056)</span></div>
<div class="r a" style="top:836px"><span class="l" style="left:33.5px;transform:scaleX(0.9362)">PCS-relative XYZ</span><span class="v" style="transform:scaleX(0.9029)">20.66  66.43   5.98 (xy 0.2219 0.7138)</span></div>
</div>
<div id="sb" class="abs"></div>
<svg class="abs" style="left:1041px;top:27px" width="16" height="18" viewBox="0 0 16 18"><path d="M5 10.9L8.6 6.8L12.2 10.9Z" fill="#444"/></svg>
<svg class="abs" style="left:1041px;top:865.2px" width="16" height="18" viewBox="0 0 16 18"><path d="M5 6.5L8.6 10.6L12.2 6.5Z" fill="#444"/></svg>
<div id="thumb" class="abs"><svg class="abs" style="left:2px;top:232px" width="9" height="10" viewBox="0 0 9 10"><path d="M0.5 1.5H8.5M0.5 4.5H8.5M0.5 7.5H8.5" stroke="#5f6268" stroke-width="1"/><path d="M0.5 2.5H8.5M0.5 5.5H8.5M0.5 8.5H8.5" stroke="#fff" stroke-width="1"/></svg></div>
</body></html>
